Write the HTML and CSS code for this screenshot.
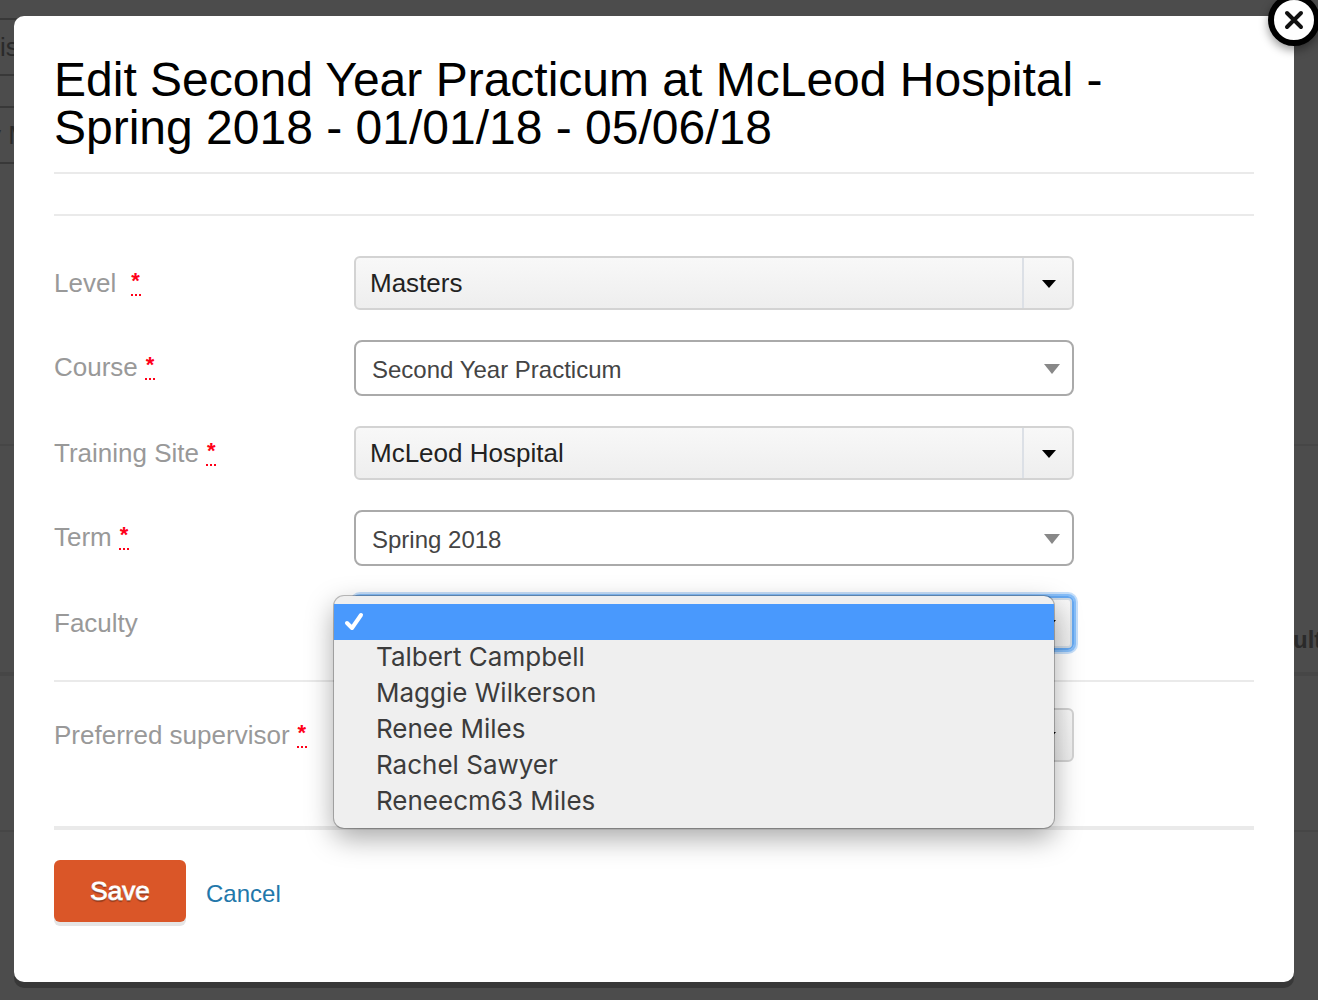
FILE: index.html
```html
<!DOCTYPE html>
<html lang="en">

<head>
  <meta charset="UTF-8">
  <title>Edit Second Year Practicum</title>
  <meta name="viewport" content="width=device-width, initial-scale=1.0">
  <link rel="stylesheet" href="styles.css">
</head>

<body>
  <!-- page behind the dialog -->
  <div class="page" aria-hidden="true">
    <div class="filters">
      <input class="filter" type="text" value="is" tabindex="-1" readonly>
      <input class="filter filter-cut" type="text" value="y M" tabindex="-1" readonly>
    </div>
    <div class="page-head">
      <span class="page-col">ult</span>
    </div>
    <div class="page-row"></div>
  </div>

  <div class="modal" role="dialog" aria-labelledby="modal-title">
    <button class="close" type="button" aria-label="Close">
      <svg width="52" height="52" viewBox="0 0 52 52">
        <circle cx="26" cy="26" r="23" fill="#fff" stroke="#000" stroke-width="6"/>
        <path d="M19 19L33 33M33 19L19 33" stroke="#111" stroke-width="4" stroke-linecap="round"/>
      </svg>
    </button>

    <h1 id="modal-title">Edit Second Year Practicum at McLeod Hospital - Spring 2018 - 01/01/18 - 05/06/18</h1>
    <div class="notice"></div>

    <form>
      <div class="fields">
        <div class="row">
          <label for="level">Level &nbsp;<abbr title="required">*</abbr></label>
          <div class="control control-gray">
            <select id="level"><option>Masters</option></select>
          </div>
        </div>
        <div class="row">
          <label for="course">Course <abbr title="required">*</abbr></label>
          <div class="control control-white">
            <select id="course"><option>Second Year Practicum</option></select>
          </div>
        </div>
        <div class="row">
          <label for="site">Training Site <abbr title="required">*</abbr></label>
          <div class="control control-gray">
            <select id="site"><option>McLeod Hospital</option></select>
          </div>
        </div>
        <div class="row">
          <label for="term">Term <abbr title="required">*</abbr></label>
          <div class="control control-white">
            <select id="term"><option>Spring 2018</option></select>
          </div>
        </div>
        <div class="row">
          <label for="faculty">Faculty</label>
          <div class="control control-gray">
            <select id="faculty" class="focused"><option></option></select>
            <ul class="menu" role="listbox" aria-label="Faculty">
              <li class="selected" role="option" aria-selected="true">
                <svg width="20" height="20" viewBox="0 0 20 20">
                  <path d="M3 11L8 16L17 3" fill="none" stroke="#fff" stroke-width="4" stroke-linecap="round" stroke-linejoin="round"/>
                </svg>
              </li>
              <li role="option">Talbert Campbell</li>
              <li role="option">Maggie Wilkerson</li>
              <li role="option">Renee Miles</li>
              <li role="option">Rachel Sawyer</li>
              <li role="option">Reneecm63 Miles</li>
            </ul>
          </div>
        </div>
      </div>

      <div class="fields supervisor">
        <div class="row">
          <label for="supervisor">Preferred supervisor <abbr title="required">*</abbr></label>
          <div class="control control-gray">
            <select id="supervisor"><option></option></select>
          </div>
        </div>
      </div>

      <div class="actions">
        <button class="save" type="submit">Save</button>
        <a class="cancel" href="#">Cancel</a>
      </div>
    </form>
  </div>
</body>

</html>
```
FILE: styles.css
```css
* {
  box-sizing: border-box;
  margin: 0;
  padding: 0;
}

body {
  min-height: 100vh;
  padding: 16px 24px 18px 14px;
  overflow: hidden;
  background-color: #4c4c4c;
  font-family: "Liberation Sans", Arial, sans-serif;
  font-size: 26px;
}

/* dimmed page */
.page {
  position: absolute;
  inset: 0;
  overflow: hidden;
}

.filters {
  display: flex;
  flex-direction: column;
  gap: 30px;
  height: 446px;
  padding-top: 18px;
  border-bottom: 2px solid #464646;
}

.filter {
  width: 300px;
  height: 58px;
  border: 2px solid #383838;
  border-width: 2px 0;
  background: none;
  color: #2a2a2a;
  font-family: inherit;
  font-size: 26px;
}

.filter-cut {
  text-indent: -12px;
}

.page-head {
  display: flex;
  align-items: flex-end;
  justify-content: flex-end;
  height: 230px;
  padding-bottom: 18px;
  border-bottom: 4px solid #464646;
}

.page-col {
  width: 25px;
  color: #2a2a2a;
  font-size: 24px;
  font-weight: bold;
  line-height: 28px;
}

.page-row {
  height: 156px;
  border-bottom: 2px solid #464646;
}

/* dialog */
.modal {
  position: relative;
  padding: 40px 40px 60px;
  border-radius: 10px;
  background-color: #fff;
  box-shadow: 0 6px 0 #383838;
}

.close {
  position: absolute;
  top: -22px;
  right: -26px;
  width: 52px;
  height: 52px;
  border: none;
  border-radius: 50%;
  background: none;
  box-shadow: 0 4px 10px rgba(0, 0, 0, 0.4);
  cursor: pointer;
}

.close svg {
  display: block;
}

h1 {
  padding-bottom: 20px;
  border-bottom: 2px solid #eaeaea;
  color: #000;
  font-size: 48px;
  font-weight: normal;
  line-height: 48px;
}

.notice {
  height: 42px;
  border-bottom: 2px solid #eaeaea;
}

.fields {
  display: flex;
  flex-direction: column;
  gap: 30px;
  padding: 40px 0 30px;
  border-bottom: 2px solid #eaeaea;
}

.supervisor {
  padding: 26px 0 64px;
  border-bottom-width: 4px;
}

.row {
  display: grid;
  grid-template-columns: 25% 60%;
  align-items: start;
}

label {
  padding-top: 12px;
  color: #999;
  line-height: 30px;
  white-space: nowrap;
}

abbr {
  display: inline-block;
  width: 10px;
  padding-bottom: 2px;
  border-bottom: 2px dotted #ff0018;
  color: #ff0018;
  font-size: 22px;
  font-weight: bold;
  line-height: 22px;
  text-align: center;
  text-decoration: none;
  vertical-align: 4px;
}

.control {
  position: relative;
}

select {
  display: block;
  width: 100%;
  height: 54px;
  padding: 0 60px 0 14px;
  border: 2px solid #d3d3d3;
  border-radius: 6px;
  appearance: none;
  background: linear-gradient(#f8f8f8, #eee);
  color: #222;
  font-family: inherit;
  font-size: 26px;
}

.control-white select {
  height: 56px;
  padding: 2px 60px 0 16px;
  border-color: #aaa;
  border-radius: 8px;
  background: #fff;
  color: #444;
  font-size: 24px;
}

/* line left of the arrow */
.control-gray::before {
  content: "";
  position: absolute;
  top: 2px;
  bottom: 2px;
  right: 50px;
  width: 2px;
  background-color: #dce0e6;
}

.control::after {
  content: "";
  position: absolute;
  top: 24px;
  right: 18px;
  border: 7px solid transparent;
  border-top: 8px solid #000;
  border-bottom: none;
}

.control-white::after {
  right: 14px;
  border-width: 10px 8px 0;
  border-top-color: #888;
}

.focused {
  border-color: #66a9f2;
  box-shadow: 0 0 0 2px #86bef9, 0 0 0 4px #c6dffa, inset 0 0 0 2px #cfdae5;
}

/* open list */
.menu {
  position: absolute;
  z-index: 2;
  top: 0;
  left: -20px;
  width: 100%;
  padding: 8px 0;
  border-radius: 10px;
  background-color: #efefef;
  box-shadow: 0 0 0 1px rgba(0, 0, 0, 0.25), 0 10px 28px rgba(0, 0, 0, 0.35);
  color: #3c3c3c;
  font-family: Inter, sans-serif;
  font-size: 26px;
  line-height: 34px;
  list-style: none;
}

.menu li {
  height: 36px;
  padding-left: 42px;
}

.menu .selected {
  display: flex;
  align-items: center;
  padding-left: 10px;
  background-color: #4999fd;
}

.actions {
  display: flex;
  align-items: center;
  gap: 20px;
  padding-top: 30px;
}

.save {
  width: 132px;
  height: 62px;
  border: none;
  border-radius: 6px;
  background-color: #da5628;
  box-shadow: 0 4px 0 #e5e5e5;
  color: #fff;
  font-family: inherit;
  font-size: 26px;
  text-shadow: 0 2px 1px rgba(0, 0, 0, 0.3);
  -webkit-text-stroke: 1px #fff;
  paint-order: stroke fill;
  cursor: pointer;
}

.cancel {
  padding-top: 6px;
  color: #2277aa;
  font-size: 24px;
  text-decoration: none;
}
```
